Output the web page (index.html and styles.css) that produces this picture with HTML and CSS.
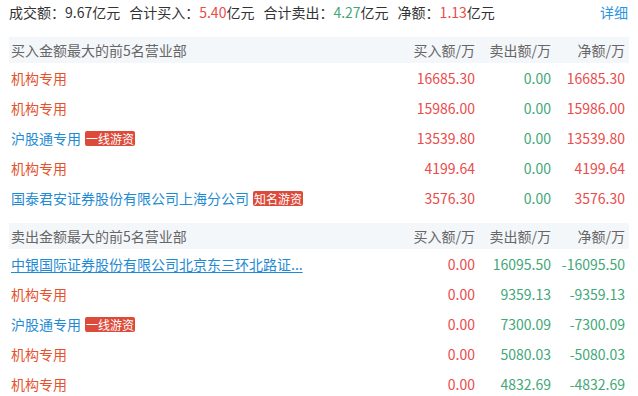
FILE: index.html
```html
<!DOCTYPE html>
<html lang="zh-CN">
<head>
<meta charset="utf-8">
<link rel="stylesheet" href="styles.css">
</head>
<body>
<div class="page">
  <div class="summary">
    <div class="stats">
      <span class="stat">成交额：<span class="num">9.67</span>亿元</span>
      <span class="stat">合计买入：<span class="num up">5.40</span>亿元</span>
      <span class="stat">合计卖出：<span class="num down">4.27</span>亿元</span>
      <span class="stat">净额：<span class="num up">1.13</span>亿元</span>
    </div>
    <a class="detail">详细</a>
  </div>

  <div class="table">
    <div class="row head">
      <div class="name">买入金额最大的前5名营业部</div>
      <div class="cell">买入额/万</div>
      <div class="cell">卖出额/万</div>
      <div class="cell">净额/万</div>
    </div>
    <div class="row">
      <div class="name"><span class="org">机构专用</span></div>
      <div class="cell up">16685.30</div><div class="cell down">0.00</div><div class="cell up">16685.30</div>
    </div>
    <div class="row">
      <div class="name"><span class="org">机构专用</span></div>
      <div class="cell up">15986.00</div><div class="cell down">0.00</div><div class="cell up">15986.00</div>
    </div>
    <div class="row">
      <div class="name"><span class="seat">沪股通专用</span><span class="tag">一线游资</span></div>
      <div class="cell up">13539.80</div><div class="cell down">0.00</div><div class="cell up">13539.80</div>
    </div>
    <div class="row">
      <div class="name"><span class="org">机构专用</span></div>
      <div class="cell up">4199.64</div><div class="cell down">0.00</div><div class="cell up">4199.64</div>
    </div>
    <div class="row">
      <div class="name"><span class="seat">国泰君安证券股份有限公司上海分公司</span><span class="tag">知名游资</span></div>
      <div class="cell up">3576.30</div><div class="cell down">0.00</div><div class="cell up">3576.30</div>
    </div>
  </div>

  <div class="table">
    <div class="row head">
      <div class="name">卖出金额最大的前5名营业部</div>
      <div class="cell">买入额/万</div>
      <div class="cell">卖出额/万</div>
      <div class="cell">净额/万</div>
    </div>
    <div class="row">
      <div class="name"><span class="seat link">中银国际证券股份有限公司北京东三环北路证...</span></div>
      <div class="cell up">0.00</div><div class="cell down">16095.50</div><div class="cell down">-16095.50</div>
    </div>
    <div class="row">
      <div class="name"><span class="org">机构专用</span></div>
      <div class="cell up">0.00</div><div class="cell down">9359.13</div><div class="cell down">-9359.13</div>
    </div>
    <div class="row">
      <div class="name"><span class="seat">沪股通专用</span><span class="tag">一线游资</span></div>
      <div class="cell up">0.00</div><div class="cell down">7300.09</div><div class="cell down">-7300.09</div>
    </div>
    <div class="row">
      <div class="name"><span class="org">机构专用</span></div>
      <div class="cell up">0.00</div><div class="cell down">5080.03</div><div class="cell down">-5080.03</div>
    </div>
    <div class="row">
      <div class="name"><span class="org">机构专用</span></div>
      <div class="cell up">0.00</div><div class="cell down">4832.69</div><div class="cell down">-4832.69</div>
    </div>
  </div>
</div>
</body>
</html>
```

FILE: styles.css
```css
html, body {
  margin: 0;
  padding: 0;
  background: #fff;
}
body {
  font-family: "Microsoft YaHei", "Noto Sans CJK SC", sans-serif;
  font-size: 14px;
  color: #333;
}
.page {
  padding: 0 9px;
}
.summary {
  display: flex;
  justify-content: space-between;
  align-items: center;
  height: 25px;
  line-height: 25px;
  margin-bottom: 12px;
}
.stats {
  display: flex;
}
.stat {
  margin-right: 9px;
}
.detail {
  color: #2a95e0;
  margin-right: 1px;
  cursor: pointer;
}
.table {
  margin-bottom: 10px;
}
.row {
  display: grid;
  grid-template-columns: 1fr 76px 76px 74px;
  height: 30px;
  line-height: 30px;
  padding: 0 4px 0 2px;
}
.row.head {
  height: 26px;
  line-height: 26px;
  background: #f4f7fa;
  color: #666;
}
.name {
  display: flex;
  align-items: center;
  white-space: nowrap;
  overflow: hidden;
}
.cell {
  text-align: right;
  white-space: nowrap;
}
.up { color: #ea4b4b; }
.down { color: #3fa877; }
.org { color: #e4532e; }
.seat { color: #1f8bd3; }
.link {
  text-decoration: underline;
  text-underline-offset: 2px;
}
.tag {
  display: inline-block;
  margin-left: 4px;
  padding: 0 1px;
  height: 15px;
  line-height: 15px;
  font-size: 12px;
  color: #fff;
  background: #dc4b3a;
  border-radius: 2px;
}
```
